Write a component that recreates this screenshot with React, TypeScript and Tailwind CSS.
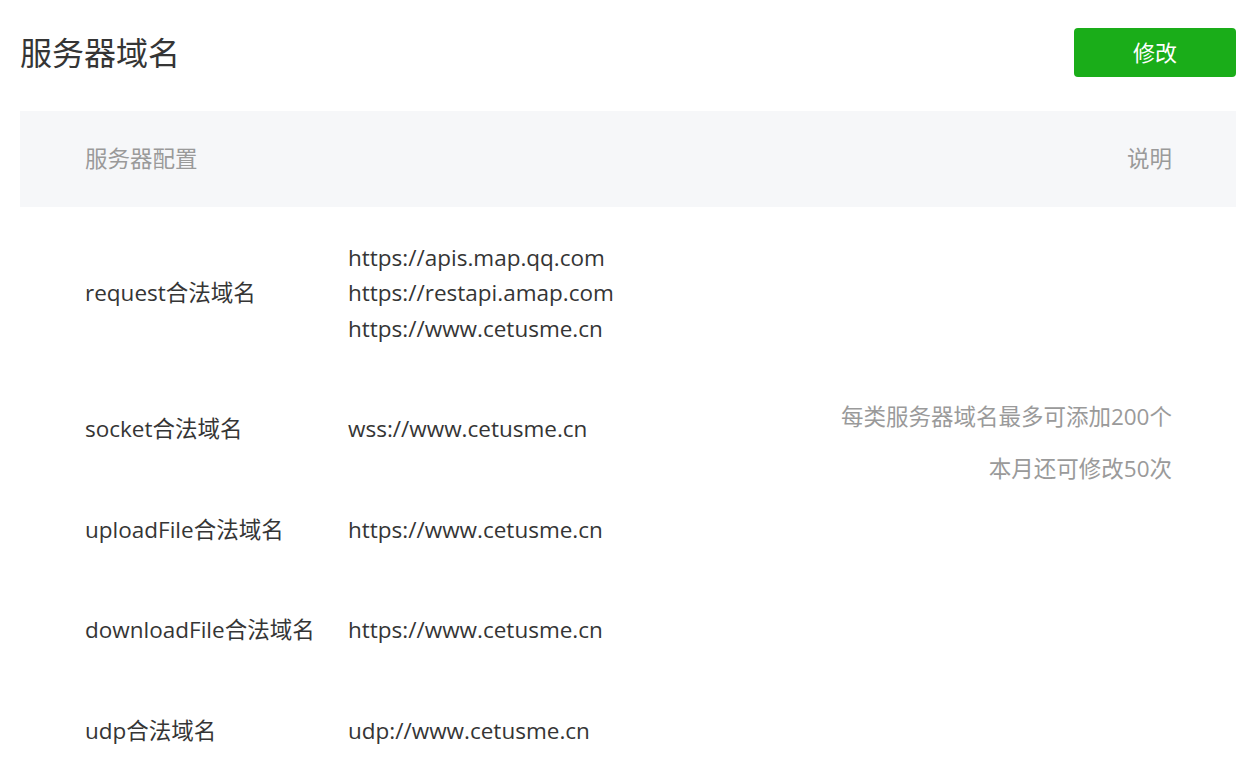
import React from "react";

const rows: { label: string; values: string[] }[] = [
  { label: "request合法域名", values: ["https://apis.map.qq.com", "https://restapi.amap.com", "https://www.cetusme.cn"] },
  { label: "socket合法域名", values: ["wss://www.cetusme.cn"] },
  { label: "uploadFile合法域名", values: ["https://www.cetusme.cn"] },
  { label: "downloadFile合法域名", values: ["https://www.cetusme.cn"] },
  { label: "udp合法域名", values: ["udp://www.cetusme.cn"] },
];

export default function App() {
  return (
    <div className="min-h-[765px] bg-white pl-[20px] pr-[24px] pt-[28px] font-['Open_Sans','Noto_Sans_CJK_SC',sans-serif] text-[#353535]">
      <div className="flex h-[49px] items-center justify-between">
        <h1 className="text-[32px] font-normal leading-none">服务器域名</h1>
        <button className="h-[49px] w-[162px] rounded-[4px] bg-[#1aad19] text-[22px] text-white">修改</button>
      </div>
      <div className="mt-[34px] flex h-[96px] items-center justify-between bg-[#f6f7f9] pl-[65px] pr-[64px] text-[22.5px] text-[#9a9a9a]">
        <span>服务器配置</span>
        <span>说明</span>
      </div>
      <div className="grid grid-cols-[263px_1fr_auto] pl-[65px] pr-[64px] text-[22.5px] leading-[35.5px]">
        {rows.map((r, i) => (
          <React.Fragment key={r.label}>
            <div className="flex items-center whitespace-nowrap py-[32.5px]">{r.label}</div>
            <div className="flex flex-col justify-center py-[32.5px]">
              {r.values.map((v) => (
                <div key={v}>{v}</div>
              ))}
            </div>
            {i === 1 ? (
              <div className="row-span-2 self-start pt-[12px] text-right leading-[52px] text-[#9a9a9a]">
                <div>每类服务器域名最多可添加200个</div>
                <div>本月还可修改50次</div>
              </div>
            ) : i === 2 ? null : (
              <div />
            )}
          </React.Fragment>
        ))}
      </div>
    </div>
  );
}
